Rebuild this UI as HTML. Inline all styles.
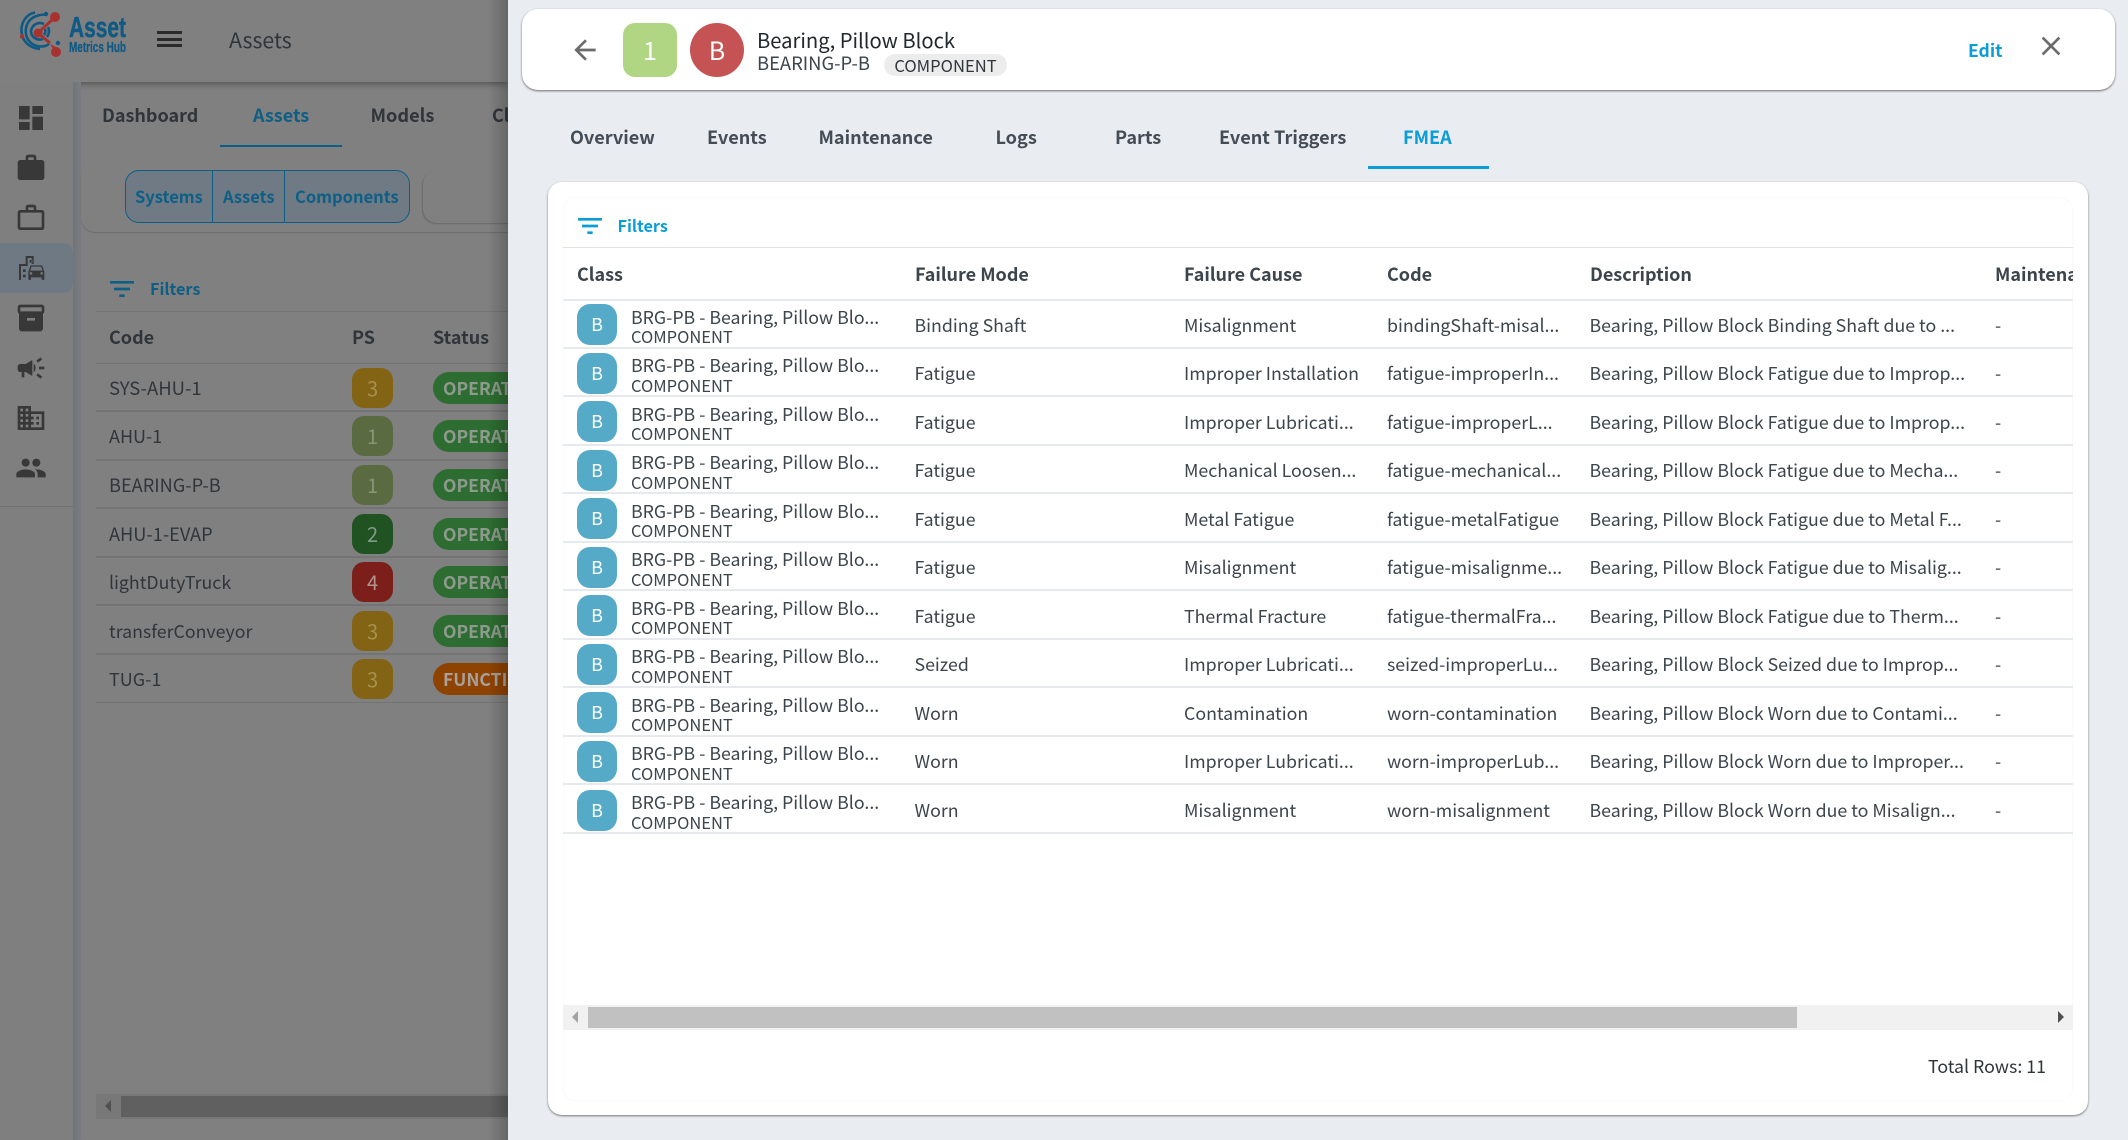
<!DOCTYPE html>
<html><head><meta charset="utf-8"><style>
*{box-sizing:border-box}
html,body{margin:0;padding:0;width:2128px;height:1140px;overflow:hidden;background:#808080}
body{position:relative;font-family:"Noto Sans CJK JP","Liberation Sans",sans-serif;font-size:17.75px;color:#3c444c}
.a{position:absolute;white-space:nowrap;line-height:24px}
svg{position:absolute;display:block}
.b{font-weight:700}
.lt{color:#30353a}
.li{position:absolute;left:96px;width:412px;height:2px;background:#747474}
.ps{position:absolute;left:352px;width:41px;height:40px;border-radius:12px;text-align:center;line-height:40px;font-size:20px}
.st{position:absolute;left:433px;width:100px;height:32px;border-radius:16px;padding-left:10px;line-height:33px;font-weight:700;font-size:17.5px;color:#8f9a8f;background:#2d6d31}
.r{position:absolute;left:563px;width:1510px;height:48.55px;border-bottom:2px solid #e6e9ed;overflow:hidden}
.r i{position:absolute;left:14px;top:4px;width:40px;height:41px;border-radius:13px;background:#55abc7;color:#fff;font-style:normal;text-align:center;line-height:41px;font-size:18px}
.r span{position:absolute;white-space:nowrap;line-height:24px;top:12.5px}
.r .c1{left:68px;top:4.5px}
.r .c2{left:68px;top:25px;line-height:22px;font-size:16.5px}
.r .m{left:351.500px}.r .f{left:621px}.r .o{left:824px}.r .d{left:1026.500px}.r .x{left:1432px}
.tab{position:absolute;top:125px;line-height:24px;font-weight:700;color:#444c55;font-size:18.1px;white-space:nowrap}
.hd{position:absolute;top:262px;line-height:24px;font-weight:700;color:#3c444c;font-size:18px;white-space:nowrap}
</style></head><body>

<!-- dimmed app behind -->
<div class="a" style="left:0;top:0;width:508px;height:82px;background:#808080;box-shadow:0 2px 6px rgba(0,0,0,.35)"></div>
<div class="a" style="left:0;top:82px;width:73px;height:1058px;background:#7f7f7f"></div>
<div class="a" style="left:73px;top:82px;width:8px;height:1058px;background:linear-gradient(90deg,#72757a,#797c80)"></div>
<div class="a" style="left:0;top:243px;width:73px;height:50px;background:#6e7983;border-radius:0 10px 10px 0"></div>
<div class="a" style="left:0;top:506px;width:73px;height:1px;background:#6f6f6f"></div>

<svg style="left:20px;top:10px" width="110" height="50" viewBox="0 0 110 50">
<g fill="none" stroke="#0f5a85" stroke-width="2.6">
<path d="M15 2.500C6 4 1 13 1.500 21C2 31 9 38 20 39"/>
<path d="M27 5C23 4 14 5 9 11C4 18 5 27 10 32C15 37 24 38 29 34"/>
<path d="M24 14C18 11 12 15 11 21C11 27 17 31 23 29"/>
<path d="M28 17C30 21 29 24 27 27M25 19C26 21 25 24 24 25"/>
</g>
<circle cx="26" cy="4" r="2.200" fill="#0f5a85"/><circle cx="38" cy="33" r="2.200" fill="#0f5a85"/><circle cx="2" cy="26.500" r="2.200" fill="#a8322f"/>
<g stroke="#a8322f" stroke-width="3" fill="none"><path d="M35 7L18 23L30 33"/></g>
<circle cx="35" cy="7" r="5" fill="#a8322f"/><circle cx="18" cy="23" r="4.500" fill="#a8322f"/><circle cx="36" cy="42" r="5" fill="#a8322f"/><path d="M30 34L33 39L38 38Z" fill="#a8322f"/>
<text x="49" y="27" textLength="57" lengthAdjust="spacingAndGlyphs" font-family="Liberation Sans" font-weight="700" font-size="29" fill="#0f5a85" stroke="#0f5a85" stroke-width=".5">Asset</text>
<text x="49" y="42" textLength="57" lengthAdjust="spacingAndGlyphs" font-family="Liberation Sans" font-weight="700" font-size="14.500" fill="#0f5a85" stroke="#0f5a85" stroke-width=".3">Metrics Hub</text>
</svg>
<div class="a" style="left:157px;top:31px;width:25px;height:3px;background:#2b2b2b"></div>
<div class="a" style="left:157px;top:38px;width:25px;height:3px;background:#2b2b2b"></div>
<div class="a" style="left:157px;top:44px;width:25px;height:3px;background:#2b2b2b"></div>
<div class="a lt" style="left:229px;top:25px;font-size:21.300px;line-height:30px">Assets</div>

<svg style="left:15px;top:102px" width="32" height="32" viewBox="0 0 24 24" fill="#383838"><path d="M3 13h8V3H3v10zm0 8h8v-6H3v6zm10 0h8V11h-8v10zm0-18v6h8V3h-8z"/></svg>
<svg style="left:15px;top:152px" width="32" height="32" viewBox="0 0 24 24" fill="#383838"><path d="M20 6h-4V4c0-1.110-.89-2-2-2h-4c-1.110 0-2 .89-2 2v2H4c-1.110 0-1.990.89-1.990 2L2 19c0 1.110.89 2 2 2h16c1.110 0 2-.89 2-2V8c0-1.110-.89-2-2-2zm-6 0h-4V4h4v2z"/></svg>
<svg style="left:15px;top:202px" width="32" height="32" viewBox="0 0 24 24" fill="#383838"><path d="M14 6V4h-4v2h4zM4 8v11h16V8H4zm16-2c1.110 0 2 .89 2 2v11c0 1.110-.89 2-2 2H4c-1.110 0-2-.89-2-2l.01-11c0-1.110.88-2 1.990-2h4V4c0-1.110.89-2 2-2h4c1.110 0 2 .89 2 2v2h4z"/></svg>
<svg style="left:15px;top:252px" width="32" height="32" viewBox="0 0 24 24" fill="#383838"><path d="M14 9V3H8v6H3v12h1.500V10.500H9.500V4.500h3V9zM6 13h2v2H6zM6 17h2v2H6zM11 6h2v2h-2z"/><path d="M20.570 10.660c-.14-.4-.52-.66-.97-.66h-7.190c-.46 0-.83.26-.98.66L10 14.770l.01 5.510c0 .38.31.72.69.72h.62c.38 0 .68-.38.68-.76V19h8v1.240c0 .38.31.76.69.76h.61c.38 0 .69-.34.69-.72l.01-1.370v-4.140l-1.430-4.110zm-8.160.34h7.190l1.030 3h-9.250l1.030-3zM12 17c-.55 0-1-.45-1-1s.45-1 1-1 1 .45 1 1-.45 1-1 1zm8 0c-.55 0-1-.45-1-1s.45-1 1-1 1 .45 1 1-.45 1-1 1z"/></svg>
<svg style="left:15px;top:302px" width="32" height="32" viewBox="0 0 24 24" fill="#383838"><path d="M20 2H4c-1 0-2 .9-2 2v3.010c0 .72.43 1.340 1 1.690V20c0 1.100 1.100 2 2 2h14c.9 0 2-.9 2-2V8.700c.57-.35 1-.97 1-1.690V4c0-1.100-1-2-2-2zm-5 12H9v-2h6v2zm5-7H4V4l16-.02V7z"/></svg>
<svg style="left:15px;top:352px" width="32" height="32" viewBox="0 0 24 24" fill="#383838"><path d="M18 11v2h4v-2h-4zm-2 6.610c.96.71 2.210 1.650 3.200 2.390.4-.53.8-1.070 1.200-1.600-.99-.74-2.240-1.680-3.200-2.400-.4.54-.8 1.080-1.200 1.610zM20.400 5.600c-.4-.53-.8-1.070-1.200-1.600-.99.74-2.240 1.680-3.200 2.400.4.53.8 1.070 1.200 1.600.96-.72 2.210-1.650 3.200-2.400zM4 9c-1.100 0-2 .9-2 2v2c0 1.100.9 2 2 2h1v4h2v-4h1l5 3V6L8 9H4zm11.500 3c0-1.330-.58-2.530-1.500-3.350v6.690c.92-.81 1.500-2.010 1.500-3.340z"/></svg>
<svg style="left:15px;top:402px" width="32" height="32" viewBox="0 0 24 24" fill="#383838"><path d="M12 7V3H2v18h20V7H12zM6 19H4v-2h2v2zm0-4H4v-2h2v2zm0-4H4V9h2v2zm0-4H4V5h2v2zm4 12H8v-2h2v2zm0-4H8v-2h2v2zm0-4H8V9h2v2zm0-4H8V5h2v2zm10 12h-8v-2h2v-2h-2v-2h2v-2h-2V9h8v10zm-2-8h-2v2h2v-2zm0 4h-2v2h2v-2z"/></svg>
<svg style="left:15px;top:451.500px" width="32" height="32" viewBox="0 0 24 24" fill="#383838"><path d="M16 11c1.660 0 2.990-1.340 2.990-3S17.660 5 16 5c-1.660 0-3 1.340-3 3s1.340 3 3 3zm-8 0c1.660 0 2.990-1.340 2.990-3S9.660 5 8 5C6.340 5 5 6.340 5 8s1.340 3 3 3zm0 2c-2.330 0-7 1.170-7 3.500V19h14v-2.500c0-2.330-4.670-3.500-7-3.500zm8 0c-.29 0-.62.02-.97.05 1.160.84 1.970 1.970 1.970 3.450V19h6v-2.500c0-2.330-4.670-3.500-7-3.500z"/></svg>

<div class="a b lt" style="left:102px;top:103px;font-size:18px">Dashboard</div>
<div class="a b" style="left:253px;top:103px;font-size:18px;color:#0d5f85">Assets</div>
<div class="a b lt" style="left:370.500px;top:103px;font-size:18.200px">Models</div>
<div class="a b lt" style="left:492px;top:103px;font-size:18px">Classes</div>
<div class="a" style="left:220px;top:145px;width:122px;height:2px;background:#0d5f85"></div>

<div class="a" style="left:81px;top:161px;width:440px;height:71px;background:#808080;border-radius:14px;box-shadow:0 1px 1px #6c6c6c"></div>
<div class="a" style="left:125px;top:170px;width:285px;height:53px;border:1px solid #0d5f85;border-radius:14px;background:#6f7a85"></div>
<div class="a" style="left:212px;top:170px;width:1px;height:53px;background:#0d5f85"></div>
<div class="a" style="left:284px;top:170px;width:1px;height:53px;background:#0d5f85"></div>
<div class="a b" style="left:135px;top:184px;font-size:16.500px;color:#0d5f85">Systems</div>
<div class="a b" style="left:223px;top:184px;font-size:16.500px;color:#0d5f85">Assets</div>
<div class="a b" style="left:295px;top:184px;font-size:16.500px;color:#0d5f85">Components</div>
<div class="a" style="left:423px;top:170px;width:100px;height:53px;border-radius:14px;background:#808080;box-shadow:-1px 1px 1px #6a6a6a"></div>

<div class="a" style="left:81px;top:246px;width:440px;height:894px;background:#808080;border-radius:14px 14px 0 0"></div>
<svg style="left:106px;top:273px" width="32" height="32" viewBox="0 0 24 24" fill="#0d5f85"><path d="M10 18h4v-2h-4v2zM3 6v2h18V6H3zm3 7h12v-2H6v2z"/></svg>
<div class="a b" style="left:150px;top:276px;font-size:16.200px;color:#0d5f85">Filters</div>
<div class="li" style="top:311px;height:1px"></div>
<div class="a b lt" style="left:109px;top:325px;font-size:18px">Code</div>
<div class="a b lt" style="left:352px;top:325px;font-size:18px">PS</div>
<div class="a b lt" style="left:433px;top:325px;font-size:18px">Status</div>
<div class="li" style="top:363px;height:1px"></div>

<div class="a lt" style="left:109px;top:376px;font-size:18.500px">SYS-AHU-1</div>
<div class="ps" style="top:368px;background:#836314;color:#a89050">3</div><div class="st" style="top:372px">OPERATIONAL</div><div class="li" style="top:410px"></div>
<div class="a lt" style="left:109px;top:424px;font-size:18px">AHU-1</div>
<div class="ps" style="top:416px;background:#5a6b41;color:#87957a">1</div><div class="st" style="top:420px">OPERATIONAL</div><div class="li" style="top:459px"></div>
<div class="a lt" style="left:109px;top:473px;font-size:18.200px">BEARING-P-B</div>
<div class="ps" style="top:465px;background:#5a6b41;color:#87957a">1</div><div class="st" style="top:469px">OPERATIONAL</div><div class="li" style="top:507px"></div>
<div class="a lt" style="left:109px;top:522px;font-size:18.200px">AHU-1-EVAP</div>
<div class="ps" style="top:514px;background:#205222;color:#83998a">2</div><div class="st" style="top:518px">OPERATIONAL</div><div class="li" style="top:556px"></div>
<div class="a lt" style="left:109px;top:570px">lightDutyTruck</div>
<div class="ps" style="top:562px;background:#7c1f1a;color:#b09590">4</div><div class="st" style="top:566px">OPERATIONAL</div><div class="li" style="top:604px"></div>
<div class="a lt" style="left:109px;top:619px">transferConveyor</div>
<div class="ps" style="top:611px;background:#836314;color:#a89050">3</div><div class="st" style="top:615px">OPERATIONAL</div><div class="li" style="top:653px"></div>
<div class="a lt" style="left:109px;top:667px;font-size:18px">TUG-1</div>
<div class="ps" style="top:659px;background:#836314;color:#a89050">3</div><div class="st" style="top:663px;background:#8f4300;color:#a8a09a">FUNCTIONAL</div><div class="li" style="top:702px;height:1px"></div>

<div class="a" style="left:96px;top:1094px;width:412px;height:25px;background:#787878"></div>
<div class="a" style="left:121px;top:1096px;width:387px;height:21px;background:#606060"></div>
<div class="a" style="left:105px;top:1100px;width:0;height:0;border-top:6px solid transparent;border-bottom:6px solid transparent;border-right:6px solid #515151"></div>

<!-- panel -->
<div class="a" style="left:488px;top:0;width:20px;height:1140px;background:linear-gradient(90deg,rgba(0,0,0,0),rgba(0,0,0,.2))"></div>
<div class="a" style="left:508px;top:0;width:1620px;height:1140px;background:#e9ecf1"></div>
<div class="a" style="left:522px;top:9px;width:1593px;height:81px;background:#fff;border-radius:16px;box-shadow:0 1px 2px rgba(0,0,0,.55)"></div>

<svg style="left:569px;top:34px" width="32" height="32" viewBox="0 0 24 24" fill="#6b6b6b"><path d="M20 11H7.830l5.590-5.590L12 4l-8 8 8 8 1.410-1.410L7.830 13H20v-2z"/></svg>
<div class="a" style="left:623px;top:23px;width:54px;height:54px;border-radius:12px;background:#b0d683;color:#fff;text-align:center;line-height:54px;font-size:25px">1</div>
<div class="a" style="left:690px;top:23px;width:54px;height:54px;border-radius:50%;background:#c55353;color:#fff;text-align:center;line-height:54px;font-size:25px">B</div>
<div class="a" style="left:757px;top:26px;font-size:20.200px;line-height:28px;color:#23282d">Bearing, Pillow Block</div>
<div class="a" style="left:757px;top:51px;font-size:18.400px;color:#3c444c">BEARING-P-B</div>
<div class="a" style="left:884px;top:54px;width:123px;height:22px;border-radius:11px;background:#ececec;color:#30353a;text-align:center;line-height:23px;font-size:16.600px">COMPONENT</div>
<div class="a" style="left:1968px;top:39px;font-size:17.500px;font-weight:700;color:#0a9dd6">Edit</div>
<svg style="left:2035px;top:30px" width="32" height="32" viewBox="0 0 24 24" fill="#6b6b6b"><path d="M19 6.410L17.590 5 12 10.590 6.410 5 5 6.410 10.590 12 5 17.590 6.410 19 12 13.410 17.590 19 19 17.590 13.410 12z"/></svg>

<div class="tab" style="left:570px">Overview</div>
<div class="tab" style="left:707px">Events</div>
<div class="tab" style="left:818.500px">Maintenance</div>
<div class="tab" style="left:995.500px">Logs</div>
<div class="tab" style="left:1115px">Parts</div>
<div class="tab" style="left:1219px">Event Triggers</div>
<div class="tab" style="left:1403px;color:#0a9dd6">FMEA</div>
<div class="a" style="left:1368px;top:166px;width:121px;height:3px;background:#0a9dd6"></div>

<div class="a" style="left:548px;top:182px;width:1540px;height:933px;background:#fff;border-radius:14px;box-shadow:0 1px 2px rgba(0,0,0,.5)"></div>
<div class="a" style="left:563px;top:197px;width:1510px;height:904px;background:#fff;border:1px solid #fafafa;border-radius:12px"></div>
<svg style="left:574px;top:209.500px" width="32" height="32" viewBox="0 0 24 24" fill="#0a9dd6"><path d="M10 18h4v-2h-4v2zM3 6v2h18V6H3zm3 7h12v-2H6v2z"/></svg>
<div class="a" style="left:617.500px;top:213px;font-weight:700;font-size:16.200px;color:#0a9dd6">Filters</div>
<div class="a" style="left:563px;top:247px;width:1510px;height:1px;background:#dfe2e6"></div>
<div class="a" style="left:563px;top:299px;width:1510px;height:2px;background:#e6e9ed"></div>
<div class="hd" style="left:577px">Class</div>
<div class="hd" style="left:915px">Failure Mode</div>
<div class="hd" style="left:1184px">Failure Cause</div>
<div class="hd" style="left:1387px">Code</div>
<div class="hd" style="left:1590px">Description</div>
<div class="a" style="left:1995px;top:262px;width:78px;overflow:hidden;font-weight:700;font-size:18px;color:#3c444c">Maintenance</div>

<div class="r" style="top:300px"><i>B</i><span class="c1">BRG-PB - Bearing, Pillow Blo...</span><span class="c2">COMPONENT</span><span class="m">Binding Shaft</span><span class="f">Misalignment</span><span class="o">bindingShaft-misal...</span><span class="d">Bearing, Pillow Block Binding Shaft due to ...</span><span class="x">-</span></div>
<div class="r" style="top:348.550px"><i>B</i><span class="c1">BRG-PB - Bearing, Pillow Blo...</span><span class="c2">COMPONENT</span><span class="m">Fatigue</span><span class="f">Improper Installation</span><span class="o">fatigue-improperIn...</span><span class="d">Bearing, Pillow Block Fatigue due to Improp...</span><span class="x">-</span></div>
<div class="r" style="top:397.100px"><i>B</i><span class="c1">BRG-PB - Bearing, Pillow Blo...</span><span class="c2">COMPONENT</span><span class="m">Fatigue</span><span class="f">Improper Lubricati...</span><span class="o">fatigue-improperL...</span><span class="d">Bearing, Pillow Block Fatigue due to Improp...</span><span class="x">-</span></div>
<div class="r" style="top:445.650px"><i>B</i><span class="c1">BRG-PB - Bearing, Pillow Blo...</span><span class="c2">COMPONENT</span><span class="m">Fatigue</span><span class="f">Mechanical Loosen...</span><span class="o">fatigue-mechanical...</span><span class="d">Bearing, Pillow Block Fatigue due to Mecha...</span><span class="x">-</span></div>
<div class="r" style="top:494.200px"><i>B</i><span class="c1">BRG-PB - Bearing, Pillow Blo...</span><span class="c2">COMPONENT</span><span class="m">Fatigue</span><span class="f">Metal Fatigue</span><span class="o">fatigue-metalFatigue</span><span class="d">Bearing, Pillow Block Fatigue due to Metal F...</span><span class="x">-</span></div>
<div class="r" style="top:542.750px"><i>B</i><span class="c1">BRG-PB - Bearing, Pillow Blo...</span><span class="c2">COMPONENT</span><span class="m">Fatigue</span><span class="f">Misalignment</span><span class="o">fatigue-misalignme...</span><span class="d">Bearing, Pillow Block Fatigue due to Misalig...</span><span class="x">-</span></div>
<div class="r" style="top:591.300px"><i>B</i><span class="c1">BRG-PB - Bearing, Pillow Blo...</span><span class="c2">COMPONENT</span><span class="m">Fatigue</span><span class="f">Thermal Fracture</span><span class="o">fatigue-thermalFra...</span><span class="d">Bearing, Pillow Block Fatigue due to Therm...</span><span class="x">-</span></div>
<div class="r" style="top:639.850px"><i>B</i><span class="c1">BRG-PB - Bearing, Pillow Blo...</span><span class="c2">COMPONENT</span><span class="m">Seized</span><span class="f">Improper Lubricati...</span><span class="o">seized-improperLu...</span><span class="d">Bearing, Pillow Block Seized due to Improp...</span><span class="x">-</span></div>
<div class="r" style="top:688.400px"><i>B</i><span class="c1">BRG-PB - Bearing, Pillow Blo...</span><span class="c2">COMPONENT</span><span class="m">Worn</span><span class="f">Contamination</span><span class="o">worn-contamination</span><span class="d">Bearing, Pillow Block Worn due to Contami...</span><span class="x">-</span></div>
<div class="r" style="top:736.950px"><i>B</i><span class="c1">BRG-PB - Bearing, Pillow Blo...</span><span class="c2">COMPONENT</span><span class="m">Worn</span><span class="f">Improper Lubricati...</span><span class="o">worn-improperLub...</span><span class="d">Bearing, Pillow Block Worn due to Improper...</span><span class="x">-</span></div>
<div class="r" style="top:785.500px"><i>B</i><span class="c1">BRG-PB - Bearing, Pillow Blo...</span><span class="c2">COMPONENT</span><span class="m">Worn</span><span class="f">Misalignment</span><span class="o">worn-misalignment</span><span class="d">Bearing, Pillow Block Worn due to Misalign...</span><span class="x">-</span></div>

<div class="a" style="left:563px;top:1005px;width:1510px;height:25px;background:#f1f1f1"></div>
<div class="a" style="left:588px;top:1007px;width:1209px;height:21px;background:#c1c1c1"></div>
<div class="a" style="left:572px;top:1011px;width:0;height:0;border-top:6px solid transparent;border-bottom:6px solid transparent;border-right:6px solid #a3a3a3"></div>
<div class="a" style="left:2058px;top:1011px;width:0;height:0;border-top:6px solid transparent;border-bottom:6px solid transparent;border-left:6px solid #505050"></div>
<div class="a" style="left:1928px;top:1054px;color:#30353a">Total Rows: 11</div>
</body></html>
